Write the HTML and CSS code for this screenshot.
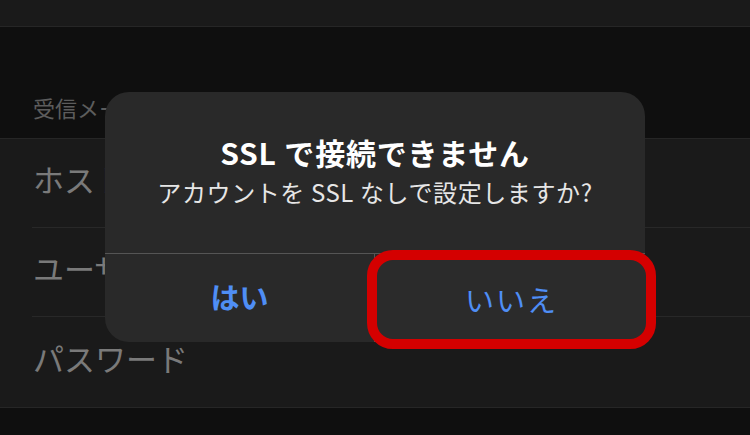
FILE: index.html
```html
<!DOCTYPE html>
<html lang="ja">
<head>
  <meta charset="UTF-8">
  <title>SSL で接続できません</title>
  <link rel="stylesheet" href="styles.css">
</head>
<body>

  <div class="topbar"></div>

  <div class="section-title">受信メールサーバ</div>

  <div class="group">
    <div class="row">ホスト名</div>
    <div class="row">ユーザ名</div>
    <div class="row">パスワード</div>
  </div>

  <!-- alert over the settings list -->
  <div class="alert">
    <div class="alert-body">
      <div class="alert-title">SSL で接続できません</div>
      <div class="alert-msg">アカウントを SSL なしで設定しますか?</div>
    </div>
    <div class="alert-buttons">
      <div class="btn btn-yes">はい</div>
      <div class="btn"></div>
    </div>
    <div class="highlight">いいえ</div>
  </div>

</body>
</html>
```

FILE: styles.css
```css
body { margin: 0; background: #0f0f0f; font-family: "Noto Sans CJK JP", "Noto Sans", sans-serif; width: 750px; height: 435px; overflow: hidden; position: relative; }
.topbar { height: 26px; background: #1a1a1a; border-bottom: 1px solid #262626; }
.section-title { height: 111px; box-sizing: border-box; padding: 66px 0 0 33px; font-size: 22px; line-height: 28px; color: #5c5c5c; white-space: nowrap; overflow: hidden; }
.group { background: #1a1a1a; border-top: 1px solid #262626; border-bottom: 1px solid #262626; padding-left: 32px; }
.row { height: 89px; box-sizing: border-box; display: flex; align-items: center; padding: 0 0 10px 1px; font-size: 31px; color: #7a7a7a; border-bottom: 1px solid #282828; }
.row:last-child { border-bottom: none; height: 90px; }

.alert { position: absolute; left: 105px; top: 92px; width: 540px; height: 250px; background: #292929; border-radius: 24px; display: flex; flex-direction: column; }
.alert-body { flex: 1; display: flex; flex-direction: column; align-items: center; padding-top: 41px; box-sizing: border-box; }
.alert-title { font-size: 30px; line-height: 38px; font-weight: bold; color: #fff; letter-spacing: 0.8px; }
.alert-msg { font-size: 24px; line-height: 30px; color: #e6e6e6; margin-top: 6px; letter-spacing: 0.6px; }
.alert-buttons { height: 88px; border-top: 1px solid #555; display: grid; grid-template-columns: 270px 1fr; }
.btn { display: flex; align-items: center; justify-content: center; font-size: 29px; color: #4f8ef5; }
.btn-yes { font-weight: bold; border-right: 1px solid #555; padding-bottom: 4px; }

.highlight { position: absolute; left: 262px; top: 158px; width: 289px; height: 99px; box-sizing: border-box; border: 10px solid #d40000; border-radius: 26px; background: #2b2b2b; display: flex; align-items: center; justify-content: center; font-size: 29px; letter-spacing: 2px; color: #4f8ef5; padding-bottom: 2px; }
```
